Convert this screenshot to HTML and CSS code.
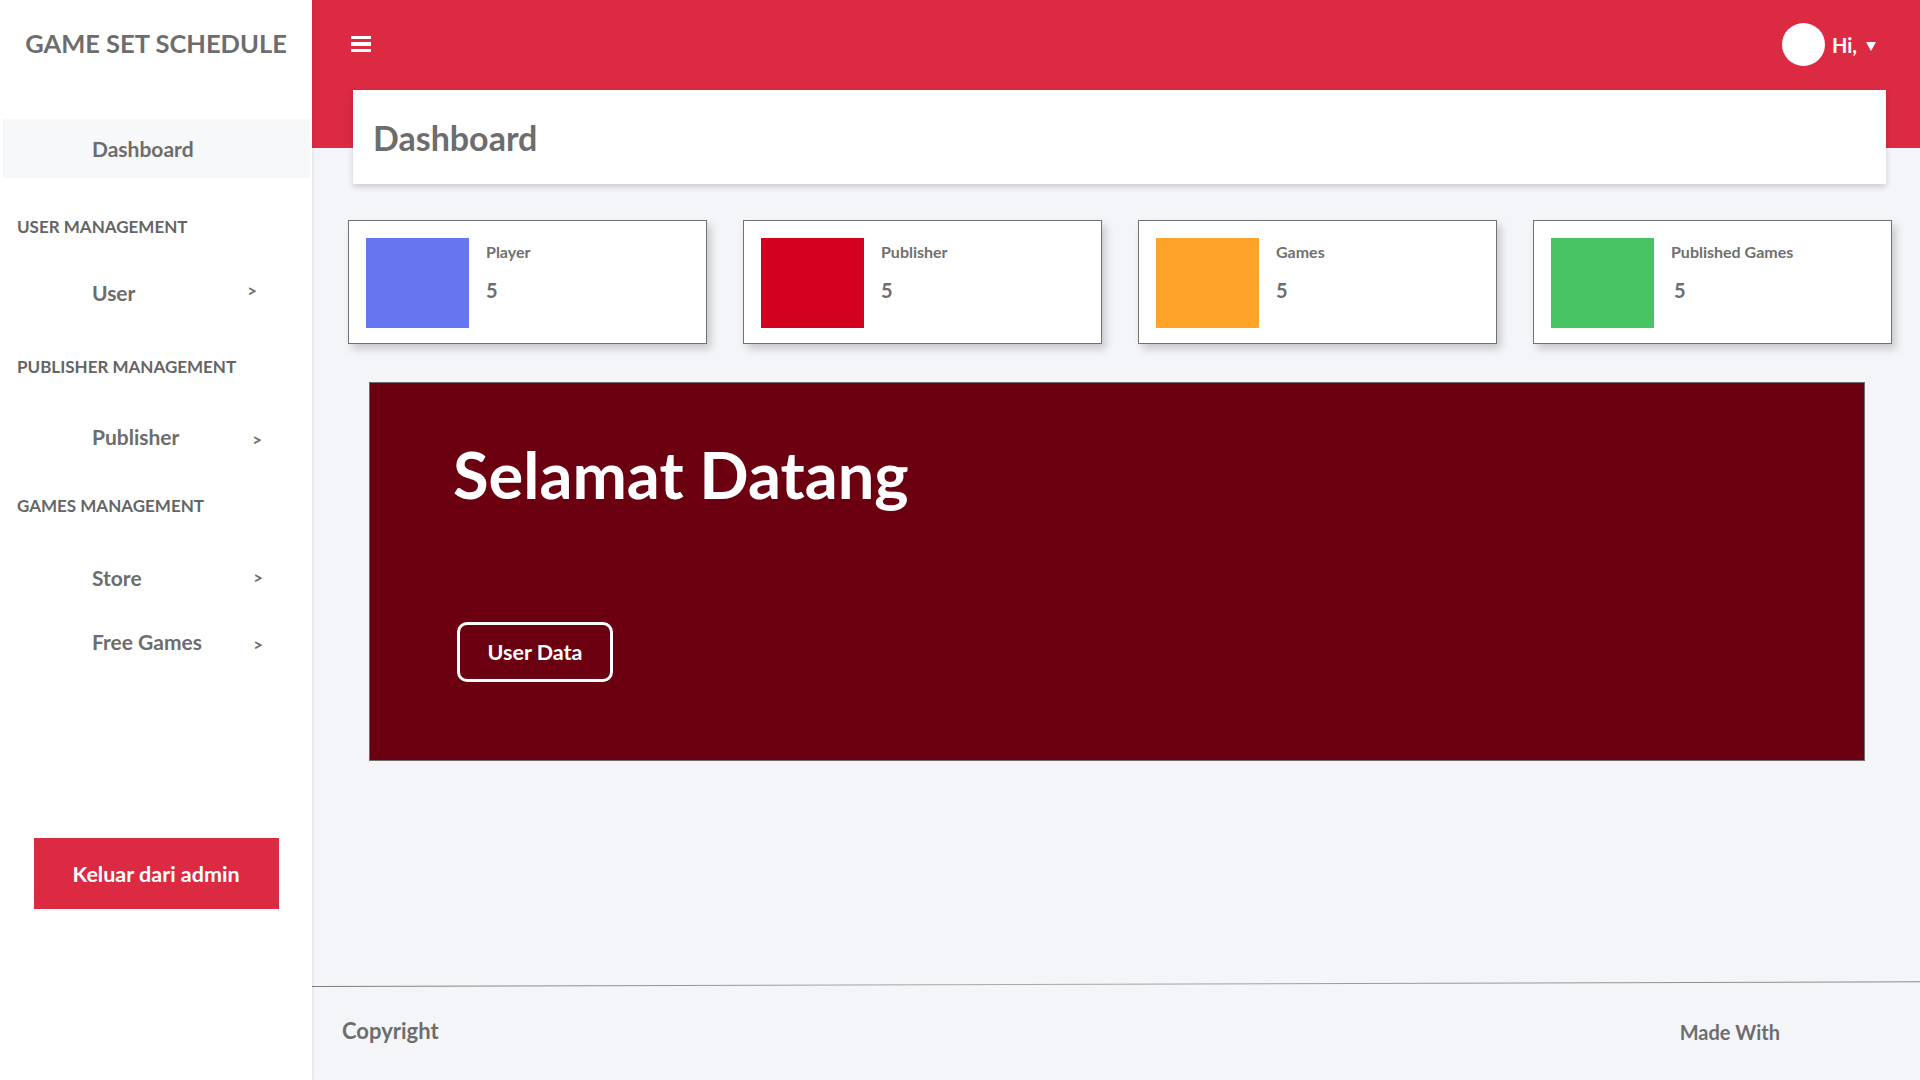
FILE: index.html
```html
<!DOCTYPE html>
<html lang="id">
<head>
<meta charset="utf-8">
<title>Game Set Schedule - Dashboard</title>
<link rel="stylesheet" href="styles.css">
</head>
<body>
<div class="app">
  <aside class="sidebar">
    <div class="brand">GAME SET SCHEDULE</div>
    <nav class="nav">
      <a class="nav-link active" href="#">Dashboard</a>
      <div class="nav-heading nav-heading-first">USER MANAGEMENT</div>
      <a class="nav-link" href="#"><span>User</span><span class="chev chev-user">&gt;</span></a>
      <div class="nav-heading">PUBLISHER MANAGEMENT</div>
      <a class="nav-link" href="#"><span>Publisher</span><span class="chev chev-low chev-pub">&gt;</span></a>
      <div class="nav-heading nav-heading-last">GAMES MANAGEMENT</div>
      <a class="nav-link" href="#"><span>Store</span><span class="chev">&gt;</span></a>
      <a class="nav-link nav-link-tight" href="#"><span>Free Games</span><span class="chev chev-low">&gt;</span></a>
    </nav>
    <button class="logout">Keluar dari admin</button>
  </aside>
  <main class="main">
    <header class="topbar">
      <div class="burger"><span></span><span></span><span></span></div>
      <div class="user">
        <span class="avatar"></span>
        <span class="hi">Hi,</span>
        <span class="caret"></span>
      </div>
    </header>
    <div class="page-title"><h1>Dashboard</h1></div>
    <section class="stats">
      <div class="stat">
        <div class="swatch swatch-blue"></div>
        <div class="stat-body"><div class="stat-label">Player</div><div class="stat-value">5</div></div>
      </div>
      <div class="stat">
        <div class="swatch swatch-red"></div>
        <div class="stat-body"><div class="stat-label">Publisher</div><div class="stat-value">5</div></div>
      </div>
      <div class="stat">
        <div class="swatch swatch-orange"></div>
        <div class="stat-body"><div class="stat-label">Games</div><div class="stat-value">5</div></div>
      </div>
      <div class="stat">
        <div class="swatch swatch-green"></div>
        <div class="stat-body"><div class="stat-label">Published Games</div><div class="stat-value stat-value-indent">5</div></div>
      </div>
    </section>
    <section class="welcome">
      <h2>Selamat Datang</h2>
      <button class="outline-btn">User Data</button>
    </section>
    <footer class="footer">
      <div class="footer-rule"></div>
      <div class="footer-row">
        <span class="copy">Copyright</span>
        <span class="made">Made With</span>
      </div>
    </footer>
  </main>
</div>
</body>
</html>
```

FILE: styles.css
```css
* { box-sizing: border-box; }

html, body {
  margin: 0;
  padding: 0;
  width: 1920px;
  height: 1080px;
  overflow: hidden;
}

body {
  font-family: "Lato", "Liberation Sans", sans-serif;
  color: #6d6d6d;
  background: #f4f5f9;
}

.app {
  display: flex;
  height: 1080px;
}

/* Sidebar */
.sidebar {
  width: 312px;
  flex: 0 0 312px;
  background: #ffffff;
  display: flex;
  flex-direction: column;
  box-shadow: 1px 0 3px rgba(0, 0, 0, 0.08);
  position: relative;
  z-index: 2;
}

.brand {
  padding-top: 28px;
  height: 119px;
  font-size: 25.5px;
  line-height: 30px;
  font-weight: 700;
  text-align: center;
  color: #6d6d6d;
}

.nav {
  display: flex;
  flex-direction: column;
}

.nav-link {
  display: flex;
  align-items: center;
  height: 59px;
  margin: 0 2px 0 3px;
  padding: 0 0 0 89px;
  font-size: 21px;
  font-weight: 700;
  color: #6d6d6d;
  text-decoration: none;
}

.nav-link.active {
  background: #f7f8fa;
}

.nav-link-tight {
  margin-top: 4px;
}

.chev {
  margin-left: auto;
  margin-right: 47px;
  font-size: 17px;
  font-weight: 700;
}

.chev-user {
  margin-right: 53px;
  margin-top: -4px;
}

.chev-pub {
  margin-right: 48px;
}

.chev-low {
  margin-top: 6px;
}

.nav-heading {
  height: 85px;
  padding: 37px 0 0 17px;
  font-size: 17px;
  line-height: 16px;
  font-weight: 700;
  color: #656565;
}

.nav-heading-first {
  padding-top: 41px;
}

.nav-heading-last {
  height: 82px;
  padding-top: 32px;
}

.nav-heading-last + .nav-link + .nav-link {
  margin-top: 5px;
}

.logout {
  margin: 167px auto 0;
  width: 245px;
  height: 71px;
  border: none;
  background: #dc2a43;
  color: #ffffff;
  font-family: inherit;
  font-size: 21.5px;
  font-weight: 700;
}

/* Main */
.main {
  flex: 1;
  display: flex;
  flex-direction: column;
  background: linear-gradient(#dc2a43 0, #dc2a43 148px, #f4f5f9 148px);
}

.topbar {
  height: 89px;
  display: flex;
  align-items: center;
  justify-content: space-between;
  padding: 0 44px 0 39px;
}

.burger {
  width: 20px;
  display: flex;
  flex-direction: column;
  gap: 3.5px;
  margin-top: -1px;
}

.burger span {
  display: block;
  height: 3.3px;
  background: #ffffff;
}

.user {
  display: flex;
  align-items: center;
}

.avatar {
  width: 43px;
  height: 43px;
  border-radius: 50%;
  background: #ffffff;
}

.hi {
  margin-left: 7px;
  font-size: 20px;
  font-weight: 700;
  color: #ffffff;
}

.caret {
  margin-left: 9px;
  margin-top: 3px;
  width: 0;
  height: 0;
  border-left: 5px solid transparent;
  border-right: 5px solid transparent;
  border-top: 9px solid #ffffff;
}

.page-title {
  height: 94px;
  margin: 1px 34px 0 41px;
  padding-left: 20px;
  display: flex;
  align-items: center;
  background: #ffffff;
  box-shadow: 0 3px 6px rgba(0, 0, 0, 0.16);
}

.page-title h1 {
  margin: 0;
  font-size: 34px;
  font-weight: 700;
  color: #6d6d6d;
}

/* Stats */
.stats {
  margin-top: 36px;
  padding-left: 36px;
  display: grid;
  grid-template-columns: repeat(4, 359px);
  gap: 36px;
}

.stat {
  height: 124px;
  border: 1px solid #727272;
  background: #ffffff;
  padding: 17px;
  display: flex;
  box-shadow: 4px 5px 8px rgba(0, 0, 0, 0.18);
}

.swatch {
  width: 103px;
  height: 90px;
  flex: 0 0 103px;
}

.swatch-blue { background: #6675f0; }
.swatch-red { background: #d4001f; }
.swatch-orange { background: #ffa329; }
.swatch-green { background: #48c463; }

.stat-body {
  padding-left: 17px;
  padding-top: 5px;
}

.stat-label {
  font-size: 16px;
  font-weight: 700;
  line-height: 18px;
  color: #707070;
}

.stat-value {
  margin-top: 17px;
  font-size: 20px;
  font-weight: 700;
  line-height: 24px;
}

.stat-value-indent {
  padding-left: 3px;
}

/* Welcome banner */
.welcome {
  margin: 38px 55px 0 57px;
  height: 379px;
  background: #6b0010;
  border: 1px solid #6e6e6e;
  padding: 61px 0 0 83px;
}

.welcome h2 {
  margin: 0;
  font-size: 65px;
  line-height: 60px;
  font-weight: 700;
  color: #ffffff;
}

.outline-btn {
  margin-top: 118px;
  margin-left: 4px;
  width: 156px;
  height: 60px;
  background: transparent;
  border: 3px solid #ffffff;
  border-radius: 10px;
  color: #ffffff;
  font-family: inherit;
  font-size: 21.5px;
  font-weight: 700;
}

/* Footer */
.footer {
  margin-top: auto;
  height: 94px;
  display: flex;
  flex-direction: column;
}

.footer-rule {
  height: 1px;
  background: linear-gradient(90deg, #7d7d7d, #a9a9a9 40%, #8a8a8a);
  transform: rotate(-0.17deg);
  transform-origin: left center;
}

.footer-row {
  flex: 1;
  display: flex;
  align-items: center;
  justify-content: space-between;
  padding: 0 140px 0 30px;
  font-size: 20px;
  font-weight: 700;
  color: #6d6d6d;
}

.copy {
  font-size: 22px;
  margin-top: -7px;
}

.made {
  margin-top: -4px;
}
```
